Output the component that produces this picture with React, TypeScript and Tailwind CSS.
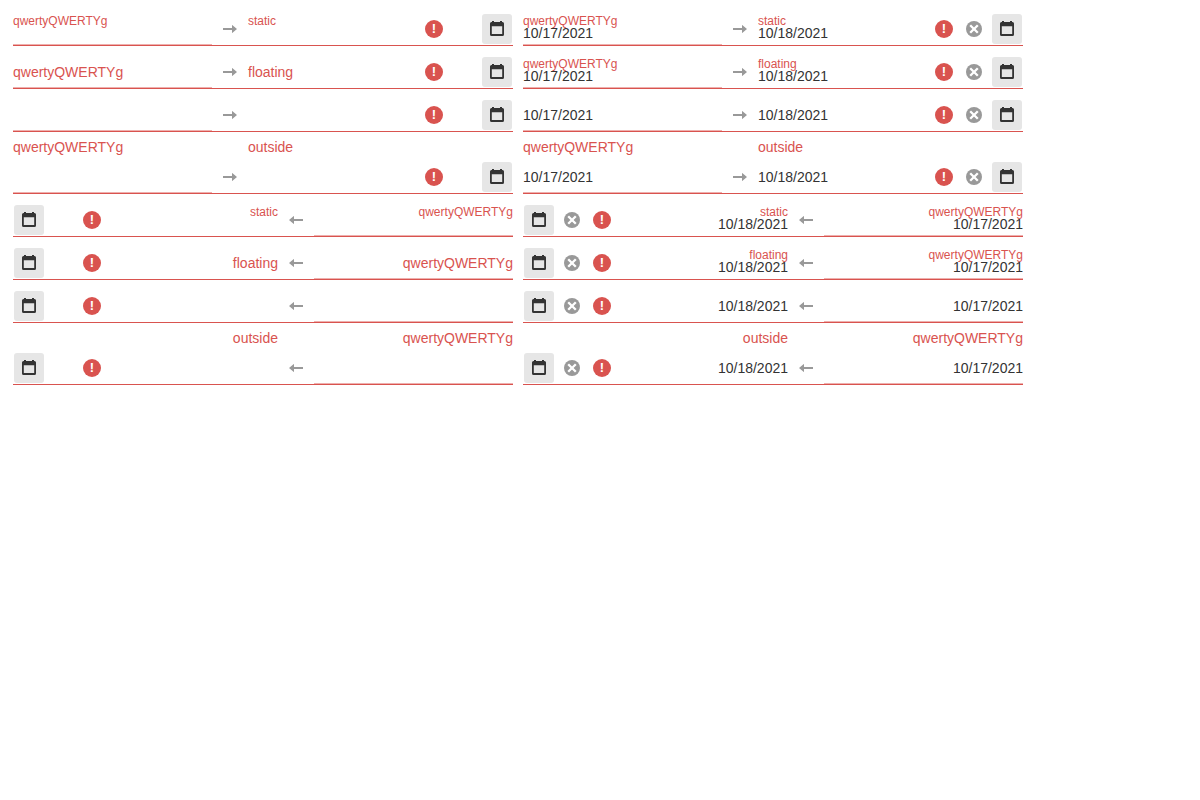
type Mode = "static" | "floating" | "hidden" | "outside";

const modes: Mode[] = ["static", "floating", "hidden", "outside"];

function Arrow({ rtl }: { rtl: boolean }) {
  return (
    <div className="flex w-9 shrink-0 items-center justify-center">
      <svg width="14" height="8" viewBox="0 0 14 8" fill="#999" className={rtl ? "rotate-180" : ""}>
        <path d="M0 2.9h9V.3q0-.4.5-.1L14 4 9.500 7.800q-.5.3-.5-.1V5.100H0z" />
      </svg>
    </div>
  );
}

function ErrorBadge() {
  return (
    <div className="flex h-[18px] w-[18px] shrink-0 items-center justify-center rounded-full bg-[#d9534f] text-[13px] leading-[18px] font-bold text-white">
      !
    </div>
  );
}

function ClearIcon() {
  return (
    <svg width="16" height="16" viewBox="0 0 16 16" className="shrink-0">
      <circle cx="8" cy="8" r="8" fill="#999" />
      <path d="M4.200 4.200l7.600 7.600M11.800 4.200l-7.600 7.600" stroke="#fff" strokeWidth="2.3" />
    </svg>
  );
}

function CalendarButton() {
  return (
    <div className="mx-px flex h-[30px] w-[30px] shrink-0 items-center justify-center rounded-[3px] bg-[#e6e6e6]">
      <svg width="14" height="16" viewBox="0 0 14 16" fill="#333">
        <path fillRule="evenodd" d="M2 0h2v1h6V0h2v1h.5A1.5 1.5 0 0 1 14 2.5v11a1.5 1.5 0 0 1-1.5 1.5h-11A1.5 1.5 0 0 1 0 13.5v-11A1.5 1.5 0 0 1 1.5 1H2zM1.800 5.200v7.900h10.400V5.200z" />
      </svg>
    </div>
  );
}

function Cell({ label, value, mode, first }: { label: string; value: string; mode: Mode; first: boolean }) {
  const inside = mode === "static" || mode === "floating";
  const small = mode === "static" || value !== "";
  return (
    <div className={`relative h-8 ${first ? "w-[199px] shrink-0 border-b border-[#eeb0ae]" : "min-w-0 flex-1"}`}>
      <div className={`leading-4 text-[#333] ${inside ? "pt-3" : "pt-2"}`}>{value}</div>
      {inside && (
        <div className={`absolute inset-x-0 text-[#d9534f] ${small ? "top-0 text-xs leading-4" : "top-2 text-sm leading-4"}`}>
          {label}
        </div>
      )}
    </div>
  );
}

function DateRange({ mode, filled, rtl }: { mode: Mode; filled: boolean; rtl: boolean }) {
  return (
    <div dir={rtl ? "rtl" : "ltr"} className="w-[500px]">
      {mode === "outside" && (
        <div className="flex h-[19px] text-[#d9534f]">
          <div className="w-[235px] leading-[10px]">qwertyQWERTYg</div>
          <div className="leading-[10px]">outside</div>
        </div>
      )}
      <div className="flex h-[33px] items-center border-b border-[#d9534f]">
        <Cell first mode={mode} label="qwertyQWERTYg" value={filled ? "10/17/2021" : ""} />
        <Arrow rtl={rtl} />
        <Cell first={false} mode={mode} label={mode} value={filled ? "10/18/2021" : ""} />
        <ErrorBadge />
        <div className="ms-[13px] me-[9px] flex w-4">{filled && <ClearIcon />}</div>
        <CalendarButton />
      </div>
    </div>
  );
}

export default function App() {
  return (
    <div className="h-[800px] bg-white p-[13px] text-sm" style={{ fontFamily: '"Liberation Sans", Arial, sans-serif' }}>
      <div className="flex flex-col gap-[10px]">
        {[false, true].map((rtl) =>
          modes.map((mode) => (
            <div key={`${mode}-${rtl}`} className="flex gap-[10px]">
              <DateRange mode={mode} rtl={rtl} filled={false} />
              <DateRange mode={mode} rtl={rtl} filled />
            </div>
          )),
        )}
      </div>
    </div>
  );
}
